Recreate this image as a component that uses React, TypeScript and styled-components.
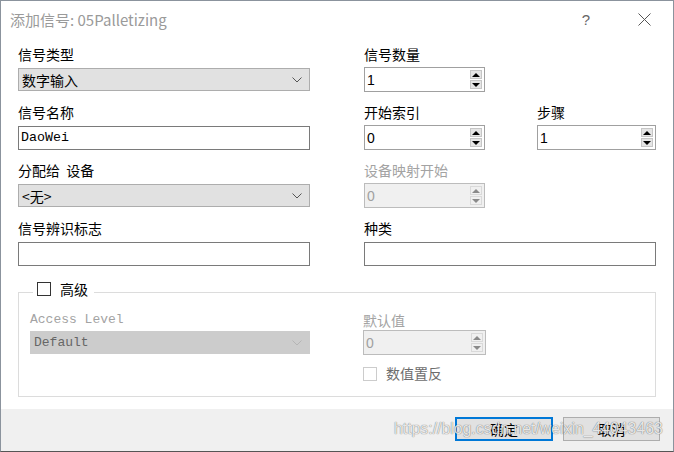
import styled, { createGlobalStyle } from "styled-components";

const GlobalStyle = createGlobalStyle`
  html, body {
    margin: 0;
    padding: 0;
  }
  body {
    width: 674px;
    height: 452px;
    overflow: hidden;
    background: #fff;
    font-family: "Noto Sans CJK SC", "Noto Sans", sans-serif;
  }
  * {
    box-sizing: border-box;
  }
`;

const Window = styled.div`
  position: relative;
  width: 674px;
  height: 452px;
  display: flex;
  flex-direction: column;
  border: 1px solid #8b939d;
  border-bottom-color: #555;
  background: #fff;
`;

const TitleBar = styled.div`
  height: 37px;
  flex-shrink: 0;
  display: flex;
  align-items: center;
`;

const Title = styled.div`
  flex: 1;
  padding-left: 9px;
  font-size: 15px;
  color: #9a9a9a;
  line-height: 37px;
`;

const CaptionButton = styled.div`
  width: 46px;
  height: 37px;
  display: flex;
  align-items: center;
  justify-content: center;
  color: #666;
  font-size: 15px;
  font-family: "Liberation Sans", sans-serif;
`;

const CaptionButtons = styled.div`
  display: flex;
  gap: 12px;
  padding-right: 6px;
`;

const Body = styled.div`
  flex: 1;
  padding: 6px 17px 0 17px;
`;

const FormGrid = styled.div`
  display: grid;
  grid-template-columns: 292px 292px;
  column-gap: 54px;
  row-gap: 10px;
`;

const SubGrid = styled.div`
  display: grid;
  grid-template-columns: 121px 119px;
  column-gap: 52px;
`;

const Field = styled.div`
  display: flex;
  flex-direction: column;
`;

const Label = styled.div<{ $disabled?: boolean; $mono?: boolean; $tight?: boolean }>`
  height: 20px;
  line-height: 20px;
  margin-bottom: ${(p) => (p.$tight ? "1px" : "4px")};
  font-size: ${(p) => (p.$mono ? "13px" : "14px")};
  font-family: ${(p) =>
    p.$mono ? `"Liberation Mono", monospace` : `"Noto Sans CJK SC", sans-serif`};
  color: ${(p) => (p.$disabled ? "#a3a3a3" : "#000")};
  white-space: pre;
`;

const Combo = styled.div<{ $disabled?: boolean }>`
  height: 23px;
  display: flex;
  align-items: center;
  justify-content: space-between;
  padding: 0 7px 0 3px;
  border: 1px solid ${(p) => (p.$disabled ? "#cccccc" : "#adadad")};
  background: ${(p) => (p.$disabled ? "#cccccc" : "#e1e1e1")};
  font-size: ${(p) => (p.$disabled ? "13px" : "14px")};
  font-family: ${(p) =>
    p.$disabled ? `"Liberation Mono", monospace` : `"Noto Sans CJK SC", sans-serif`};
  color: ${(p) => (p.$disabled ? "#666" : "#000")};
  svg {
    stroke: ${(p) => (p.$disabled ? "#b5b5b5" : "#555")};
  }
`;

const TextBox = styled.div`
  height: 24px;
  border: 1px solid #7a7a7a;
  background: #fff;
  padding: 0 2px;
  line-height: 22px;
  font-size: 13.3px;
  font-family: "Liberation Mono", monospace;
  color: #000;
`;

const SpinBox = styled.div<{ $disabled?: boolean }>`
  height: 25px;
  margin-top: -1px;
  display: flex;
  align-items: center;
  justify-content: space-between;
  padding: 0 2px 0 2px;
  border: 1px solid ${(p) => (p.$disabled ? "#bcbcbc" : "#a0a0a0")};
  background: ${(p) => (p.$disabled ? "#f0f0f0" : "#fff")};
  font-size: 14px;
  font-family: "Liberation Sans", sans-serif;
  color: ${(p) => (p.$disabled ? "#a0a0a0" : "#000")};
`;

const SpinButtons = styled.div`
  display: flex;
  flex-direction: column;
  gap: 1px;
`;

const SpinButton = styled.div<{ $down?: boolean; $disabled?: boolean }>`
  width: 12px;
  height: 9px;
  display: flex;
  align-items: center;
  justify-content: center;
  background: ${(p) => (p.$disabled ? "#f0f0f0" : "#e5e5e5")};
  border: 1px solid ${(p) => (p.$disabled ? "#d9d9d9" : "#c6c6c6")};
  &::after {
    content: "";
    border-left: 4px solid transparent;
    border-right: 4px solid transparent;
    ${(p) => (p.$down ? "border-top" : "border-bottom")}: 4px solid
      ${(p) => (p.$disabled ? "#8a8a8a" : "#000")};
  }
`;

const Group = styled.fieldset`
  margin: 15px 0 0 0;
  padding: 7px 12px 13px 11px;
  border: 1px solid #dcdcdc;
  min-width: 0;
`;

const Legend = styled.legend`
  display: flex;
  align-items: flex-start;
  gap: 9px;
  height: 22px;
  margin-left: 3px;
  padding: 0 6px 0 4px;
  font-size: 14px;
  line-height: 16px;
  color: #000;
`;

const GroupGrid = styled.div`
  display: grid;
  grid-template-columns: 280px 123px;
  column-gap: 53px;
`;

const CheckBox = styled.span<{ $disabled?: boolean }>`
  display: inline-block;
  flex-shrink: 0;
  width: 14px;
  height: 14px;
  margin-top: 1px;
  border: 1px solid ${(p) => (p.$disabled ? "#cccccc" : "#333")};
  background: #fff;
`;

const CheckRow = styled.div`
  margin-top: 8px;
  display: flex;
  align-items: center;
  gap: 9px;
  height: 20px;
  font-size: 14px;
  color: #6d6d6d;
  white-space: nowrap;
`;

const Footer = styled.div`
  height: 42px;
  flex-shrink: 0;
  background: #f0f0f0;
  display: flex;
  justify-content: flex-end;
  align-items: flex-start;
  gap: 10px;
  padding: 8px 13px 0 0;
`;

const PushButton = styled.div<{ $primary?: boolean; $width: number }>`
  width: ${(p) => p.$width}px;
  height: 24px;
  display: flex;
  align-items: center;
  justify-content: center;
  background: #e1e1e1;
  border: ${(p) => (p.$primary ? "2px solid #0078d7" : "1px solid #adadad")};
  font-size: 14px;
  color: #000;
`;

const Watermark = styled.div`
  position: absolute;
  left: 393px;
  top: 419px;
  font-family: "Liberation Sans", sans-serif;
  font-size: 15.8px;
  color: rgba(255, 255, 255, 0.85);
  text-shadow: 0 0 1px rgba(0, 0, 0, 0.45), 0 0 1px rgba(0, 0, 0, 0.3);
  pointer-events: none;
  white-space: nowrap;
`;

const Chevron = () => (
  <svg width="10" height="6" viewBox="0 0 10 6" fill="none" strokeWidth="1">
    <polyline points="0.5,0.5 5,5 9.5,0.5" />
  </svg>
);

const CloseIcon = () => (
  <svg width="13" height="13" viewBox="0 0 13 13" stroke="#555" strokeWidth="1">
    <line x1="0.5" y1="0.5" x2="12.5" y2="12.5" />
    <line x1="12.5" y1="0.5" x2="0.5" y2="12.5" />
  </svg>
);

type SpinProps = { value: string; disabled?: boolean };

const Spinner = ({ value, disabled }: SpinProps) => (
  <SpinBox $disabled={disabled}>
    <span>{value}</span>
    <SpinButtons>
      <SpinButton $disabled={disabled} />
      <SpinButton $down $disabled={disabled} />
    </SpinButtons>
  </SpinBox>
);

export default function App() {
  return (
    <>
      <GlobalStyle />
      <Window>
        <TitleBar>
          <Title>添加信号: 05Palletizing</Title>
          <CaptionButtons>
            <CaptionButton>?</CaptionButton>
            <CaptionButton>
              <CloseIcon />
            </CaptionButton>
          </CaptionButtons>
        </TitleBar>
        <Body>
          <FormGrid>
            <Field>
              <Label>信号类型</Label>
              <Combo>
                <span>数字输入</span>
                <Chevron />
              </Combo>
            </Field>
            <SubGrid>
              <Field>
                <Label>信号数量</Label>
                <Spinner value="1" />
              </Field>
            </SubGrid>

            <Field>
              <Label>信号名称</Label>
              <TextBox>DaoWei</TextBox>
            </Field>
            <SubGrid>
              <Field>
                <Label>开始索引</Label>
                <Spinner value="0" />
              </Field>
              <Field>
                <Label>步骤</Label>
                <Spinner value="1" />
              </Field>
            </SubGrid>

            <Field>
              <Label>分配给  设备</Label>
              <Combo>
                <span>&lt;无&gt;</span>
                <Chevron />
              </Combo>
            </Field>
            <SubGrid>
              <Field>
                <Label $disabled>设备映射开始</Label>
                <Spinner value="0" disabled />
              </Field>
            </SubGrid>

            <Field>
              <Label>信号辨识标志</Label>
              <TextBox />
            </Field>
            <Field>
              <Label>种类</Label>
              <TextBox />
            </Field>
          </FormGrid>

          <Group>
            <Legend>
              <CheckBox />
              <span>高级</span>
            </Legend>
            <GroupGrid>
              <Field>
                <Label $disabled $mono $tight>
                  Access Level
                </Label>
                <Combo $disabled>
                  <span>Default</span>
                  <Chevron />
                </Combo>
              </Field>
              <Field>
                <Label $disabled $tight>
                  默认值
                </Label>
                <Spinner value="0" disabled />
                <CheckRow>
                  <CheckBox $disabled />
                  <span>数值置反</span>
                </CheckRow>
              </Field>
            </GroupGrid>
          </Group>
        </Body>
        <Footer>
          <PushButton $primary $width={98}>
            确定
          </PushButton>
          <PushButton $width={97}>取消</PushButton>
        </Footer>
        <Watermark>https://blog.csdn.net/weixin_44043463</Watermark>
      </Window>
    </>
  );
}
